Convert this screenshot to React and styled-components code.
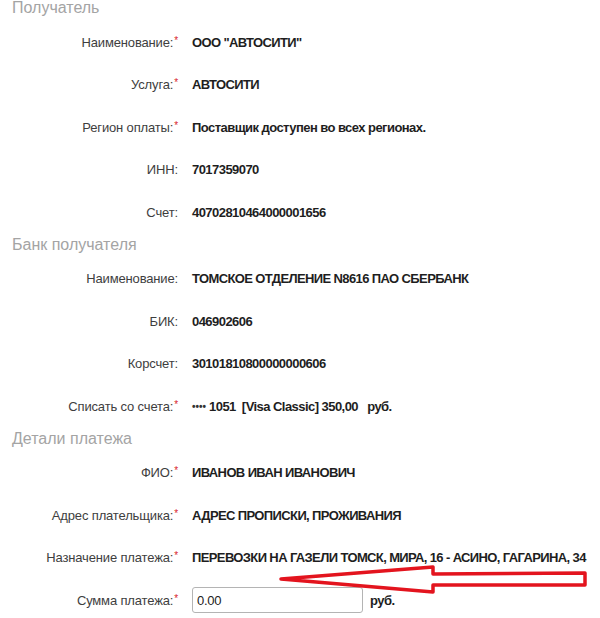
import React from 'react';
import styled, { createGlobalStyle } from 'styled-components';

const GlobalStyle = createGlobalStyle`
  html, body {
    margin: 0;
    padding: 0;
    background: #ffffff;
  }
  body {
    font-family: "Liberation Sans", Arial, sans-serif;
    width: 600px;
    height: 618px;
    overflow: hidden;
  }
`;

const Page = styled.div`
  position: relative;
  width: 600px;
  height: 618px;
`;

const Section = styled.section`
  margin-top: ${props => (props.first ? '0' : '3px')};
`;

const SectionTitle = styled.h2`
  margin: 0 0 5px 12px;
  height: 16px;
  line-height: 16px;
  font-size: 16px;
  font-weight: normal;
  color: #a4a4a4;
`;

const Row = styled.div`
  display: grid;
  grid-template-columns: 178px 1fr;
  column-gap: 14px;
  align-items: center;
  height: 42.5px;
`;

const Label = styled.div`
  text-align: right;
  font-size: 13px;
  letter-spacing: -0.15px;
  color: #3e3e3e;
  white-space: nowrap;
`;

const Star = styled.span`
  color: #d8232a;
  font-size: 10px;
  vertical-align: top;
  margin-left: 1px;
`;

const Value = styled.div`
  display: flex;
  align-items: center;
  font-size: 13px;
  font-weight: bold;
  color: #1e1e1e;
  white-space: nowrap;
  letter-spacing: ${props => (props.caps ? '-0.62px' : '-0.55px')};
`;

const Dots = styled.span`
  font-size: 10px;
  letter-spacing: 0;
  margin-right: 3px;
  color: #333;
`;

const AmountInput = styled.input`
  box-sizing: border-box;
  width: 171px;
  height: 26px;
  border: 1px solid #b4b4b4;
  border-radius: 3px;
  padding: 0 4px;
  font-family: "Liberation Sans", Arial, sans-serif;
  font-size: 13px;
  letter-spacing: -0.3px;
  color: #222;
`;

const Currency = styled.span`
  margin-left: 7px;
  font-size: 13px;
  font-weight: bold;
`;

const Arrow = styled.svg`
  position: absolute;
  left: 0;
  top: 0;
  pointer-events: none;
`;

const Field = ({ label, required, caps, children }) => (
  <Row>
    <Label>
      {label}
      {required && <Star>*</Star>}
    </Label>
    <Value caps={caps}>{children}</Value>
  </Row>
);

const App = () => (
  <Page>
    <GlobalStyle />

    <Section first>
      <SectionTitle>Получатель</SectionTitle>
      <Field label="Наименование:" required caps>ООО "АВТОСИТИ"</Field>
      <Field label="Услуга:" required caps>АВТОСИТИ</Field>
      <Field label="Регион оплаты:" required>Поставщик доступен во всех регионах.</Field>
      <Field label="ИНН:">7017359070</Field>
      <Field label="Счет:">40702810464000001656</Field>
    </Section>

    <Section>
      <SectionTitle>Банк получателя</SectionTitle>
      <Field label="Наименование:" caps>ТОМСКОЕ ОТДЕЛЕНИЕ N8616 ПАО СБЕРБАНК</Field>
      <Field label="БИК:">046902606</Field>
      <Field label="Корсчет:">30101810800000000606</Field>
      <Field label="Списать со счета:" required>
        <Dots>••••</Dots>1051&nbsp;&nbsp;[Visa Classic] 350,00&nbsp;&nbsp;&nbsp;руб.
      </Field>
    </Section>

    <Section>
      <SectionTitle>Детали платежа</SectionTitle>
      <Field label="ФИО:" required caps>ИВАНОВ ИВАН ИВАНОВИЧ</Field>
      <Field label="Адрес плательщика:" required caps>АДРЕС ПРОПИСКИ, ПРОЖИВАНИЯ</Field>
      <Field label="Назначение платежа:" required caps>
        ПЕРЕВОЗКИ НА ГАЗЕЛИ ТОМСК, МИРА, 16 - АСИНО, ГАГАРИНА, 34
      </Field>
      <Field label="Сумма платежа:" required>
        <AmountInput defaultValue="0.00" />
        <Currency>руб.</Currency>
      </Field>
    </Section>

    <Arrow width="600" height="618" viewBox="0 0 600 618">
      <polygon
        points="281,579 433,567 433,574 585,573 585,585 433,585 433,592"
        fill="none"
        stroke="#e3141e"
        strokeWidth="3.5"
        strokeLinejoin="round"
      />
    </Arrow>
  </Page>
);

export default App;
